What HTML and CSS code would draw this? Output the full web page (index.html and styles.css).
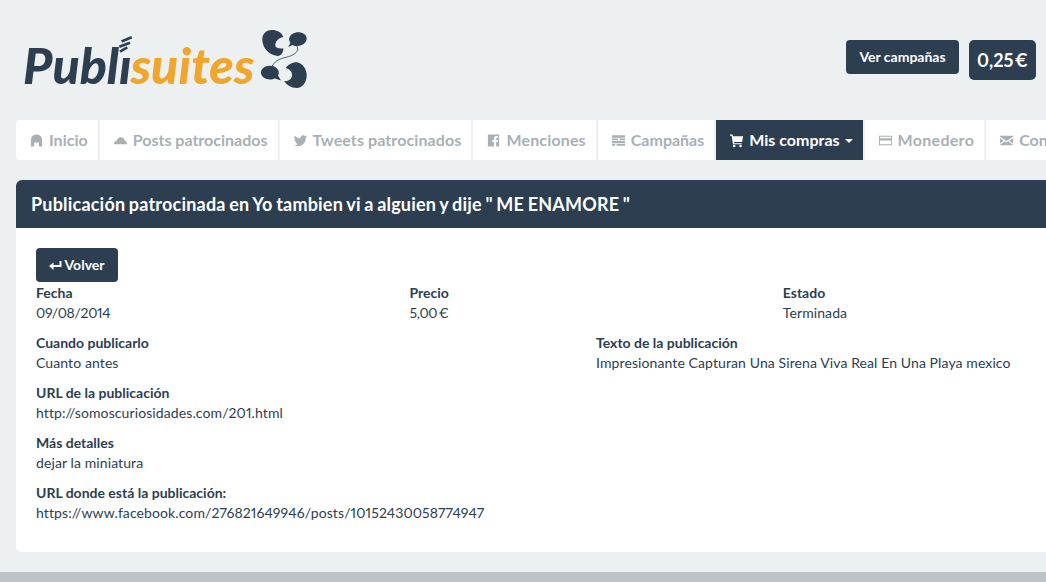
FILE: index.html
```html
<!DOCTYPE html>
<html lang="es">
<head>
    <meta charset="UTF-8">
    <title>Publisuites</title>
    <link rel="stylesheet" href="styles.css">
</head>
<body>
    <div class="page">
        <header class="top">
            <a class="logo">
                <span class="logo-text">Publı<span class="logo-orange">suites</span></span>
                <svg class="logo-stripes" width="18" height="18" viewBox="0 0 18 18">
                    <path d="M3.500 6.500 L13.700 2.300 M1.300 11.700 L12 7.700 M2 16.700 L9.300 12.300" stroke="#2c3e50" stroke-width="2.600" fill="none"/>
                </svg>
                <svg class="logo-icon" width="50" height="64" viewBox="0 0 50 64">
                    <path d="M12.700 2 C18 2 23 4.500 24.300 9 C19 10 15.500 14 16.500 18.500 C18 20.500 21 20.500 24.500 20.500 C24 25 22 28 18.500 28 C10 27 3.300 20 3.300 11.500 C3.300 6 7 2 12.700 2 Z" fill="#2c3e50"/>
                    <path d="M39 4.300 C44 4.300 47.700 7 47.700 10.500 C47.700 15 43 18 38 18 C36 18 34.500 17.800 33.500 17 L29.300 19 L31.500 14.500 C30 13 29.800 11.500 30.300 10 C31.500 6.500 35 4.300 39 4.300 Z" fill="#2c3e50"/>
                    <path d="M37.700 18 C41 23 36 26.500 29.300 28.700 C23 30.500 17 31 12.700 38.700" stroke="#2c3e50" stroke-width="0.800" fill="none"/>
                    <path d="M11 37.700 C6 37.700 2 40.500 2 44.500 C2 48.500 6 51.500 11 51.500 C13 51.500 14.500 51 16 50.500 L22 52.500 L19 47.500 C20.500 45 20 42 17.500 40 C16 38.500 13.500 37.700 11 37.700 Z" fill="#2c3e50"/>
                    <path d="M26.700 40 C29 37 33 34.300 37.700 34.300 C43.500 35 47.700 41 47.700 47.500 C47.700 54 43.500 60 37.700 60 C32.500 60 27.500 57 25.300 53 C29.500 53.500 33 51 33 47 C33 43 30 41 26.700 40 Z" fill="#2c3e50"/>
                </svg>
            </a>
            <div class="top-actions">
                <a class="btn btn-campaigns">Ver campañas</a>
                <span class="balance">0,25 €</span>
                <span class="top-mark"></span>
            </div>
        </header>

        <nav class="tabs">
            <a class="tab">
                <svg class="ico" viewBox="0 0 16 16"><path d="M8 1.500 C11.500 1.500 14 4 14 8 L14 14.500 L10.500 14.500 L10.500 10 L5.500 10 L5.500 14.500 L2 14.500 L2 8 C2 4 4.500 1.500 8 1.500 Z"/></svg>
                Inicio
            </a>
            <a class="tab">
                <svg class="ico" viewBox="0 0 16 16"><path d="M1 12 C1 9.500 2.500 8.500 4 8 C5 5.500 6.500 4.500 8.500 4.500 C10.500 4.500 12 6 12.500 8 C14 8.500 15 10 15 12 Z"/></svg>
                Posts patrocinados
            </a>
            <a class="tab tab-sp1">
                <svg class="ico" viewBox="0 0 16 16"><path d="M15 3.500 C14.500 3.800 14 4 13.400 4 C14 3.600 14.400 3 14.600 2.400 C14 2.700 13.400 3 12.800 3.100 C11.500 1.800 9 2.300 8.300 3.900 C8 4.600 8 5.200 8.100 5.800 C5.500 5.700 3.200 4.400 1.800 2.600 C1 4 1.500 5.800 2.700 6.700 C2.200 6.700 1.700 6.500 1.300 6.300 C1.300 7.900 2.400 9.100 3.900 9.500 C3.500 9.600 3 9.600 2.600 9.500 C3 10.700 4.200 11.600 5.500 11.700 C4.200 12.700 2.500 13.200 1 13 C5.500 15.700 13.500 13.500 13.500 5.300 C14.100 4.800 14.600 4.200 15 3.500 Z"/></svg>
                Tweets patrocinados
            </a>
            <a class="tab tab-sp2">
                <svg class="ico" viewBox="0 0 16 16"><path fill-rule="evenodd" d="M2 1.500 L14 1.500 L14 14.500 L10.800 14.500 L10.800 9.500 L12.600 9.500 L12.900 7.400 L10.800 7.400 L10.800 6.200 C10.800 5.500 11.100 5.100 11.800 5.100 L13 5.100 L13 3.200 L11.300 3.200 C9.400 3.200 8.400 4.300 8.400 6 L8.400 7.400 L6.700 7.400 L6.700 9.500 L8.400 9.500 L8.400 14.500 L2 14.500 Z"/></svg>
                Menciones
            </a>
            <a class="tab">
                <svg class="ico" viewBox="0 0 16 16"><path d="M1 2.500 L15 2.500 L15 5 L1 5 Z M9 5.800 L15 5.800 L15 7.600 L9 7.600 Z M1 5.800 L7.500 5.800 L7.500 7.600 L1 7.600 Z M1 8.500 L15 8.500 L15 11 L1 11 Z M6 11.800 L15 11.800 L15 13.600 L6 13.600 Z M1 11.800 L4.500 11.800 L4.500 13.600 L1 13.600 Z"/></svg>
                Campañas
            </a>
            <a class="tab tab-active">
                <svg class="ico" viewBox="0 0 16 16"><path d="M1 1.500 L3.800 1.500 L4.300 3.500 L15 3.500 L14 9.500 L5.300 9.500 L5.500 10.800 L13.500 10.800 L13.500 12 L4.300 12 L2.800 2.800 L1 2.800 Z"/><circle cx="5.500" cy="13.800" r="1.400"/><circle cx="12.300" cy="13.800" r="1.400"/></svg>
                Mis compras <span class="caret"></span>
            </a>
            <a class="tab tab-sp3">
                <svg class="ico" viewBox="0 0 16 16"><path fill-rule="evenodd" d="M1 3 L15 3 L15 13 L1 13 Z M2 4 L2 5.500 L14 5.500 L14 4 Z M2 8 L2 12 L14 12 L14 8 Z"/></svg>
                Monedero
            </a>
            <a class="tab">
                <svg class="ico" viewBox="0 0 16 16"><path d="M1 3 L15 3 L15 4 L8 8.500 L1 4 Z M1 5.500 L5 8 L1 11.500 Z M15 5.500 L11 8 L15 11.500 Z M1 13 L1 12.700 L6 8.700 L8 10 L10 8.700 L15 12.700 L15 13 Z"/></svg>
                Contacto
            </a>
        </nav>

        <section class="panel">
            <h3 class="panel-head">Publicación patrocinada en Yo tambien vi a alguien y dije " ME ENAMORE "</h3>
            <div class="panel-body">
                <a class="btn btn-back">
                    <svg class="back-ico" width="15" height="12" viewBox="0 0 14 12"><path d="M11 2 L13 2 L13 8 L5 8 L5 11 L0.500 7 L5 3.500 L5 6 L11 6 Z" fill="#fff"/></svg>
                    Volver
                </a>
                <div class="row row-3">
                    <div class="field"><b>Fecha</b><span class="num">09/08/2014</span></div>
                    <div class="field"><b>Precio</b><span class="num">5,00 €</span></div>
                    <div class="field"><b>Estado</b><span>Terminada</span></div>
                </div>
                <div class="row row-2">
                    <div>
                        <div class="field"><b>Cuando publicarlo</b><span>Cuanto antes</span></div>
                        <div class="field"><b>URL de la publicación</b><span>http://somoscuriosidades.com/201.html</span></div>
                        <div class="field"><b>Más detalles</b><span>dejar la miniatura</span></div>
                        <div class="field"><b>URL donde está la publicación:</b><span>https://www.facebook.com/276821649946/posts/10152430058774947</span></div>
                    </div>
                    <div>
                        <div class="field"><b>Texto de la publicación</b><span>Impresionante Capturan Una Sirena Viva Real En Una Playa mexico</span></div>
                    </div>
                </div>
            </div>
        </section>
    </div>
    <footer class="bottom"></footer>
</body>
</html>
```

FILE: styles.css
```css
/* Publisuites - detalle de compra */
html, body {
    margin: 0;
    padding: 0;
    height: 100%;
}
body {
    font-family: Lato, "Liberation Sans", sans-serif;
    font-size: 14px;
    line-height: 20px;
    color: #2c3e50;
    background-color: #ecf0f1;
    overflow: hidden;
    display: flex;
    flex-direction: column;
    font-variant-numeric: proportional-nums;
}
.page {
    width: 1160px;
    margin-left: 16px;
    height: 572px;
    flex-shrink: 0;
}
.top {
    height: 120px;
    display: flex;
    justify-content: space-between;
    width: 1032px;
}
.logo {
    position: relative;
    display: block;
    width: 300px;
    height: 120px;
}
.logo-text {
    position: absolute;
    left: 7px;
    top: 35px;
    font-size: 50px;
    line-height: 60px;
    font-weight: 900;
    font-style: italic;
    color: #2c3e50;
    white-space: nowrap;
}
.logo-orange {
    color: #f0a52b;
    font-weight: 900;
    margin-left: -1px;
    letter-spacing: 0.1px;
}
.logo-stripes {
    position: absolute;
    left: 102px;
    top: 35px;
}
.logo-icon {
    position: absolute;
    left: 243px;
    top: 28px;
}
.top-actions {
    display: flex;
    align-items: flex-start;
    gap: 10px;
    padding-top: 40px;
}
.btn {
    display: inline-block;
    background-color: #2c3e50;
    color: #fff;
    border-radius: 4px;
    font-weight: 700;
    font-size: 14px;
    box-sizing: border-box;
}
.btn-campaigns {
    width: 113px;
    height: 34px;
    line-height: 34px;
    text-align: center;
}
.balance {
    display: block;
    width: 67px;
    height: 40px;
    line-height: 40px;
    text-align: center;
    background-color: #2c3e50;
    color: #fff;
    border-radius: 5px;
    font-size: 18px;
    font-weight: 700;
    word-spacing: -3px;
}
.top-mark {
    display: block;
    width: 2px;
    height: 1px;
    margin-top: 18px;
    background-color: #b4bcc2;
}
.tabs {
    display: flex;
    gap: 2px;
    height: 40px;
    margin-bottom: 20px;
}
.tab {
    display: flex;
    align-items: center;
    padding: 0 10px 0 13px;
    background-color: #fff;
    color: #a8b0b6;
    font-size: 16px;
    font-weight: 700;
    white-space: nowrap;
}
.tab:first-child {
    border-radius: 4px 0 0 4px;
}
.tab-sp1 {
    letter-spacing: 0.1px;
}
.tab-sp2 {
    letter-spacing: 0.15px;
}
.tab-sp3 {
    letter-spacing: 0.3px;
}
.ico {
    width: 15px;
    height: 15px;
    margin-right: 5px;
    fill: #a8b0b6;
    flex-shrink: 0;
}
.tab-active {
    background-color: #2c3e50;
    color: #fff;
}
.tab-active .ico {
    fill: #fff;
}
.caret {
    display: inline-block;
    width: 0;
    height: 0;
    margin-left: 5px;
    margin-top: 2px;
    border-left: 4px solid transparent;
    border-right: 4px solid transparent;
    border-top: 4px solid #fff;
}
.panel {
    background-color: #fff;
    border-radius: 6px;
    overflow: hidden;
    height: 372px;
}
.panel-head {
    margin: 0;
    height: 48px;
    line-height: 48px;
    padding-left: 15px;
    background-color: #2c3e50;
    color: #fff;
    font-size: 18px;
    font-weight: 700;
    letter-spacing: 0.2px;
    word-spacing: -1px;
}
.panel-body {
    padding: 20px 20px 0;
}
.btn-back {
    display: flex;
    align-items: center;
    justify-content: center;
    gap: 2px;
    width: 82px;
    height: 34px;
    padding-right: 2px;
}
.row {
    display: grid;
}
.row-3 {
    grid-template-columns: repeat(3, 373.4px);
    margin-top: 1px;
}
.row-2 {
    grid-template-columns: 560px 560px;
}
.field {
    height: 40px;
    margin-bottom: 10px;
}
.field b, .field span {
    display: block;
    white-space: nowrap;
}
.field span {
    letter-spacing: 0.1px;
}
.field .num {
    letter-spacing: -0.3px;
    word-spacing: -2px;
}
.bottom {
    flex: 1;
    background-color: #bdc3c7;
}
```
